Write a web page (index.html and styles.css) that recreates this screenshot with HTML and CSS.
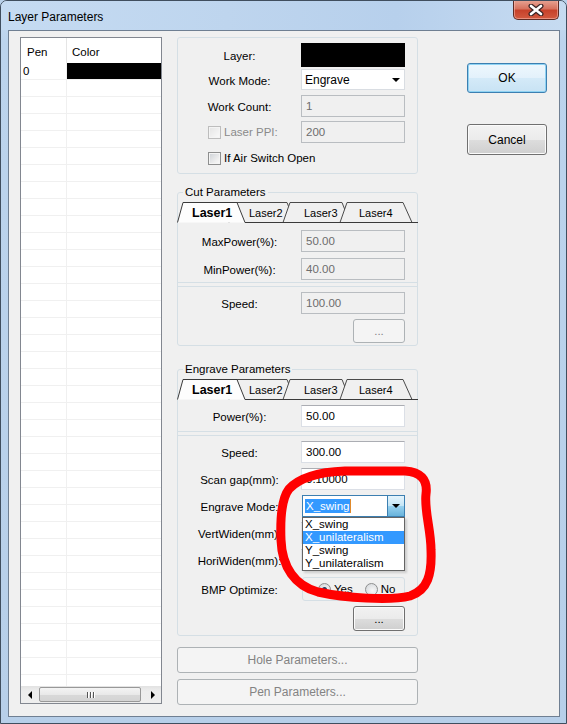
FILE: index.html
```html
<!DOCTYPE html>
<html>
<head>
<meta charset="utf-8">
<title>Layer Parameters</title>
<link rel="stylesheet" href="styles.css">
</head>
<body>
<div class="window">
  <div class="titlebar">
    <span class="title">Layer Parameters</span>
    <span class="close-btn">
      <svg width="16" height="12" viewBox="0 0 16 12"><path d="M3 2 L13 10 M13 2 L3 10" stroke="#3b2525" stroke-width="5" stroke-linecap="round"/><path d="M3 2 L13 10 M13 2 L3 10" stroke="#ffffff" stroke-width="2.6" stroke-linecap="round"/></svg>
    </span>
  </div>
  <div class="client">
    <div class="pen-list">
      <div class="list-header"><span class="hd-pen">Pen</span><span class="hd-color">Color</span></div>
      <div class="list-rows">
        <div class="list-row"><span class="cell-pen">0</span><span class="cell-color swatch"></span></div>
      </div>
      <div class="hscroll">
        <span class="sb-arrow"><span class="tri-left"></span></span>
        <span class="sb-track"><span class="sb-thumb"><span class="grip"></span><span class="grip"></span><span class="grip"></span></span></span>
        <span class="sb-arrow"><span class="tri-right"></span></span>
      </div>
    </div>

    <div class="params">
      <div class="group-box general">
        <div class="row r-layer"><span class="lbl">Layer:</span><span class="color-box"></span></div>
        <div class="row r-mode"><span class="lbl">Work Mode:</span><span class="select"><span class="select-text">Engrave</span><span class="select-arrow"></span></span></div>
        <div class="row r-count"><span class="lbl">Work Count:</span><span class="edit disabled">1</span></div>
        <div class="row r-ppi"><span class="check-lbl disabled"><span class="check disabled"></span>Laser PPI:</span><span class="edit disabled">200</span></div>
        <div class="row r-air"><span class="check-lbl span-all"><span class="check"></span>If Air Switch Open</span></div>
      </div>

      <fieldset class="group cut">
        <legend>Cut Parameters</legend>
        <div class="tabs">
          <svg class="tab-shapes" width="241" height="24" viewBox="0 0 241 24">
            <path class="tab-bg" d="M52 23.5 L60 3.5 H110 L118 23.5"/>
            <path class="tab-bg" d="M106 23.5 L113 3.5 H165 L173 23.5"/>
            <path class="tab-bg" d="M163 23.5 L170 3.5 H226 L235 23.5"/>
            <path class="tab-base" d="M68 23.5 H241"/>
            <path class="tab-sel" d="M0.5 23.5 L6 3.5 H60 L68 23.5"/>
          </svg>
          <span class="tab active">Laser1</span>
          <span class="tab">Laser2</span>
          <span class="tab">Laser3</span>
          <span class="tab">Laser4</span>
        </div>
        <div class="panel cut-p1">
          <div class="row"><span class="lbl">MaxPower(%):</span><span class="edit disabled">50.00</span></div>
          <div class="row"><span class="lbl">MinPower(%):</span><span class="edit disabled">40.00</span></div>
        </div>
        <div class="panel cut-p2">
          <div class="row"><span class="lbl">Speed:</span><span class="edit disabled">100.00</span></div>
          <div class="row"><span></span><span class="btn small disabled">...</span></div>
        </div>
      </fieldset>

      <fieldset class="group engrave">
        <legend>Engrave Parameters</legend>
        <div class="tabs">
          <svg class="tab-shapes" width="241" height="24" viewBox="0 0 241 24">
            <path class="tab-bg" d="M52 23.5 L60 3.5 H110 L118 23.5"/>
            <path class="tab-bg" d="M106 23.5 L113 3.5 H165 L173 23.5"/>
            <path class="tab-bg" d="M163 23.5 L170 3.5 H226 L235 23.5"/>
            <path class="tab-base" d="M68 23.5 H241"/>
            <path class="tab-sel" d="M0.5 23.5 L6 3.5 H60 L68 23.5"/>
          </svg>
          <span class="tab active">Laser1</span>
          <span class="tab">Laser2</span>
          <span class="tab">Laser3</span>
          <span class="tab">Laser4</span>
        </div>
        <div class="panel eng-p1">
          <div class="row"><span class="lbl">Power(%):</span><span class="edit">50.00</span></div>
        </div>
        <div class="panel eng-p2">
          <div class="row"><span class="lbl">Speed:</span><span class="edit">300.00</span></div>
          <div class="row"><span class="lbl">Scan gap(mm):</span><span class="edit">0.10000</span></div>
          <div class="row r-emode"><span class="lbl">Engrave Mode:</span>
            <span class="combo open">
              <span class="combo-text"><span class="sel-text">X_swing</span><span class="caret"></span></span>
              <span class="combo-btn"><span class="select-arrow"></span></span>
              <span class="combo-list">
                <span class="combo-item">X_swing</span>
                <span class="combo-item hi">X_unilateralism</span>
                <span class="combo-item">Y_swing</span>
                <span class="combo-item">Y_unilateralism</span>
              </span>
            </span>
          </div>
          <div class="row"><span class="lbl">VertWiden(mm):</span><span class="edit"></span></div>
          <div class="row"><span class="lbl">HoriWiden(mm):</span><span class="edit"></span></div>
          <div class="row r-bmp"><span class="lbl">BMP Optimize:</span>
            <span class="radio-box">
              <span class="radio-opt"><span class="radio on"></span>Yes</span>
              <span class="radio-opt"><span class="radio"></span>No</span>
            </span>
          </div>
          <div class="row r-dots"><span></span><span class="btn small">...</span></div>
        </div>
      </fieldset>

      <span class="btn wide disabled hole">Hole Parameters...</span>
      <span class="btn wide disabled pen">Pen Parameters...</span>
    </div>

    <div class="actions">
      <span class="btn default ok">OK</span>
      <span class="btn cancel">Cancel</span>
    </div>
  </div>
  <div class="bottom-frame"></div>

  <svg class="annotation" width="567" height="724" viewBox="0 0 567 724">
    <path d="M289 489 C299 478, 320 472, 345 471 L405 471 C420 472, 428 479, 426 494 C424 510, 431 530, 431 550 C432 574, 428 590, 410 596 C390 601, 345 598, 318 592 C295 586, 282 567, 281 540 C280 515, 282 498, 289 489 Z" fill="none" stroke="#ff0000" stroke-width="9" stroke-linejoin="round"/>
  </svg>
</div>
</body>
</html>
```

FILE: styles.css
```css
* { box-sizing: border-box; }

body {
  margin: 0;
  font: 11px "Liberation Sans", Arial, sans-serif;
  color: #000;
  background: #b9d1ea;
}

.window {
  position: relative;
  width: 567px;
  height: 724px;
  border: 1px solid #404e5e;
  border-radius: 7px 7px 0 0;
  background: linear-gradient(to bottom, #c9ddf2 0, #bcd4ed 40px, #b7cfe9 100%);
  display: flex;
  flex-direction: column;
  overflow: hidden;
}

.titlebar {
  height: 29px;
  display: flex;
  justify-content: space-between;
  align-items: flex-start;
  background: linear-gradient(to right, #c5dbf2 0%, #bed5ee 40%, #b7d0ec 70%, #c6dbf1 100%);
}

.title {
  font-size: 12px;
  padding: 9px 0 0 7px;
  color: #000;
}

.close-btn {
  width: 46px;
  height: 20px;
  margin: -1px 7px 0 0;
  border: 1px solid #5e2b24;
  border-top: none;
  border-radius: 0 0 5px 5px;
  background: linear-gradient(to bottom, #e8a696 0%, #d7735f 45%, #c7422b 55%, #d25a40 100%);
  box-shadow: inset 0 0 0 1px rgba(255, 200, 190, 0.5);
  display: flex;
  align-items: center;
  justify-content: center;
}

.client {
  height: 687px;
  margin: 0 6px 0 7px;
  border: 1px solid #6f7f92;
  background: #f0f0f0;
  display: flex;
  align-items: flex-start;
  padding: 6px 0 0 11px;
}

.bottom-frame { flex: 1; }

/* ---------- pen list ---------- */
.pen-list {
  width: 142px;
  height: 667px;
  border: 1px solid #828790;
  background: #fff;
  display: flex;
  flex-direction: column;
}

.list-header {
  height: 25px;
  display: flex;
  flex: none;
  font-size: 11.5px;
}

.hd-pen {
  width: 46px;
  border-right: 1px solid #e5e5e5;
  padding: 8px 0 0 6px;
}

.hd-color { padding: 8px 0 0 5px; }

.list-rows {
  flex: 1;
  background:
    linear-gradient(#f0f0f0, #f0f0f0) 45px 0 / 1px 100% no-repeat,
    repeating-linear-gradient(to bottom, #fff 0, #fff 16px, #f0f0f0 16px, #f0f0f0 17px);
}

.list-row {
  height: 16px;
  display: flex;
}

.cell-pen {
  width: 46px;
  padding-left: 2px;
  line-height: 16px;
  font-size: 11.5px;
}

.swatch {
  flex: 1;
  background: #000;
}

.hscroll {
  height: 17px;
  flex: none;
  display: flex;
  background: linear-gradient(to bottom, #e2e2e2, #ededed 30%, #eeeeee);
}

.sb-arrow {
  width: 17px;
  display: flex;
  align-items: center;
  justify-content: center;
}

.tri-left {
  border-right: 4px solid #000;
  border-top: 4px solid transparent;
  border-bottom: 4px solid transparent;
}

.tri-right {
  border-left: 4px solid #000;
  border-top: 4px solid transparent;
  border-bottom: 4px solid transparent;
}

.sb-track {
  flex: 1;
  padding: 1px 0 1px 1px;
}

.sb-thumb {
  width: 102px;
  height: 15px;
  border: 1px solid #989898;
  border-radius: 2px;
  background: linear-gradient(to bottom, #f4f4f4 0%, #e9e9e9 50%, #d9d9d9 51%, #d4d4d4 100%);
  display: flex;
  justify-content: center;
  align-items: center;
  gap: 2px;
}

.grip {
  width: 1px;
  height: 6px;
  background: #555;
  box-shadow: 1px 0 0 #fff;
}

/* ---------- params ---------- */
.params {
  width: 241px;
  margin-left: 15px;
  display: flex;
  flex-direction: column;
}

.group-box {
  border: 1px solid #d5dfe5;
  border-radius: 3px;
}

.general {
  height: 137px;
  padding-top: 5px;
}

.row {
  display: grid;
  grid-template-columns: 123px 104px;
  align-items: center;
  height: 22px;
}

.lbl {
  text-align: center;
  white-space: nowrap;
  padding-top: 2px;
  font-size: 11.5px;
}

.r-layer { height: 24px; }
.r-mode { height: 21px; margin-top: 2px; }
.r-count { margin-top: 5px; }
.r-ppi { margin-top: 4px; }
.r-air { margin-top: 4px; }

.color-box {
  height: 24px;
  background: #000;
}

.select {
  height: 21px;
  background: #fff;
  border: 1px solid #d9dde2;
  display: flex;
  align-items: center;
  justify-content: space-between;
  padding: 0 4px 0 3px;
  font-size: 12px;
}

.select-arrow {
  border-top: 4px solid #000;
  border-left: 4px solid transparent;
  border-right: 4px solid transparent;
}

.edit {
  height: 22px;
  background: #fff;
  border: 1px solid #dbdfe6;
  border-top-color: #abadb3;
  padding: 3px 0 0 4px;
  line-height: 14px;
  font-size: 11.5px;
}

.edit.disabled {
  background: #f0f0f0;
  border-color: #b9bdc1;
  color: #6d6d6d;
}

.check-lbl {
  display: flex;
  align-items: center;
  gap: 3px;
  padding-left: 30px;
  white-space: nowrap;
  font-size: 11.5px;
}

.check-lbl.span-all { grid-column: 1 / 3; }

.check-lbl.disabled { color: #8a8a8a; }

.check {
  width: 13px;
  height: 13px;
  border: 1px solid #8e8f8f;
  background: linear-gradient(135deg, #cdd1d6 0%, #f0f0f0 70%, #fafafa 100%);
  box-shadow: inset 0 0 0 1px #f4f4f4;
  flex: none;
}

.check.disabled {
  border-color: #bdbdbd;
  background: linear-gradient(135deg, #e4e4e4, #fafafa);
}

/* fieldset groups */
.group {
  margin: 12px 0 0;
  padding: 0;
  border: 1px solid #d5dfe5;
  border-radius: 3px;
  min-width: 0;
}

.engrave { margin-top: 17px; }

legend {
  margin-left: 5px;
  padding: 0 2px;
  line-height: 13px;
  font-size: 11.5px;
}

.tabs {
  position: relative;
  height: 24px;
  margin: 0 -1px;
  display: flex;
  padding-left: 15px;
}

.tab-shapes {
  position: absolute;
  left: 0;
  top: 0;
}

.tab-bg { fill: #f0f0f0; stroke: #4a4a4a; stroke-width: 1; }
.tab-base { fill: none; stroke: #3a3a3a; stroke-width: 1; }
.tab-sel { fill: #fdfdfd; stroke: #3a3a3a; stroke-width: 1; }

.tab {
  position: relative;
  width: 55px;
  padding-top: 7px;
  line-height: 14px;
  font-size: 11px;
}

.tab.active {
  width: 57px;
  font-weight: bold;
  font-size: 12.5px;
}

.panel {
  display: flex;
  flex-direction: column;
  gap: 5px;
}

.cut-p1 { padding: 7px 0 2px; gap: 6px; border-bottom: 1px solid #d5dfe5; }
.cut-p2 { padding: 5px 0 2px; margin-top: 3px; border-top: 1px solid #d5dfe5; }
.cut-p2 .row:last-child { height: 24px; }

.eng-p1 { padding: 5px 0 4px; border-bottom: 1px solid #d5dfe5; }
.eng-p2 { padding: 5px 0 4px; margin-top: 3px; border-top: 1px solid #d5dfe5; }

.r-bmp { height: 24px; margin-top: 1px; }
.r-dots { height: 25px; }

/* combo open */
.combo {
  position: relative;
  height: 22px;
  border: 1px solid #3c7fb1;
  background: #fff;
  display: flex;
  margin-left: 1px;
}

.combo-text {
  flex: 1;
  display: flex;
  align-items: center;
  padding-left: 2px;
}

.sel-text {
  background: #3399ff;
  color: #fff;
  line-height: 14px;
  padding: 0 1px;
  font-size: 11.5px;
}

.caret {
  width: 1px;
  height: 14px;
  background: #e08a2c;
}

.combo-btn {
  width: 17px;
  border-left: 1px solid #3c7fb1;
  background: linear-gradient(to bottom, #e5f4fc 0%, #c4e5f6 50%, #98d1ef 51%, #68b3db 100%);
  display: flex;
  align-items: center;
  justify-content: center;
}

.combo-list {
  position: absolute;
  left: -1px;
  right: -1px;
  top: 21px;
  z-index: 5;
  background: #fff;
  border: 1px solid #646464;
  display: flex;
  flex-direction: column;
  box-shadow: 2px 2px 2px rgba(0, 0, 0, 0.15);
}

.combo-item {
  height: 13px;
  line-height: 13px;
  padding-left: 2px;
  font-size: 11.5px;
}

.combo-item.hi {
  background: #3399ff;
  color: #fff;
}

.radio-box {
  height: 24px;
  border: 1px solid #d5dfe5;
  border-radius: 3px;
  margin-left: 1px;
  display: flex;
  align-items: center;
  padding-left: 15px;
  gap: 12px;
  font-size: 11.5px;
}

.radio-opt {
  display: flex;
  align-items: center;
  gap: 3px;
}

.radio {
  width: 13px;
  height: 13px;
  border-radius: 50%;
  border: 1px solid #8e8f8f;
  background: radial-gradient(circle at 60% 60%, #f8f8f8, #d0d3d7);
  display: flex;
  align-items: center;
  justify-content: center;
}

.radio.on::after {
  content: "";
  width: 5px;
  height: 5px;
  border-radius: 50%;
  background: #1e3f63;
}

/* buttons */
.btn {
  display: flex;
  align-items: center;
  justify-content: center;
  border: 1px solid #707070;
  border-radius: 3px;
  background: linear-gradient(to bottom, #f2f2f2 0%, #ebebeb 50%, #dddddd 51%, #cfcfcf 100%);
  box-shadow: inset 0 0 0 1px #fbfbfb;
  font-size: 11.5px;
}

.btn.disabled {
  border-color: #adb2b5;
  background: #f4f4f4;
  box-shadow: none;
  color: #838383;
}

.btn.small {
  width: 52px;
  height: 100%;
  justify-self: end;
}

.btn.wide { height: 26px; font-size: 12px; }
.hole { margin-top: 11px; }
.pen { margin-top: 6px; }

.actions {
  width: 80px;
  margin-left: 49px;
  display: flex;
  flex-direction: column;
}

.ok {
  height: 30px;
  margin-top: 26px;
  border-color: #3c7fb1;
  background: linear-gradient(to bottom, #eef7fd 0%, #e3f1fb 50%, #d4eaf8 51%, #c8e3f4 100%);
  box-shadow: inset 0 0 0 1px #8fd3f3;
  font-size: 12px;
}

.cancel {
  height: 31px;
  margin-top: 31px;
  font-size: 12px;
}

.annotation {
  position: absolute;
  left: -1px;
  top: -1px;
  pointer-events: none;
  z-index: 10;
}
```
